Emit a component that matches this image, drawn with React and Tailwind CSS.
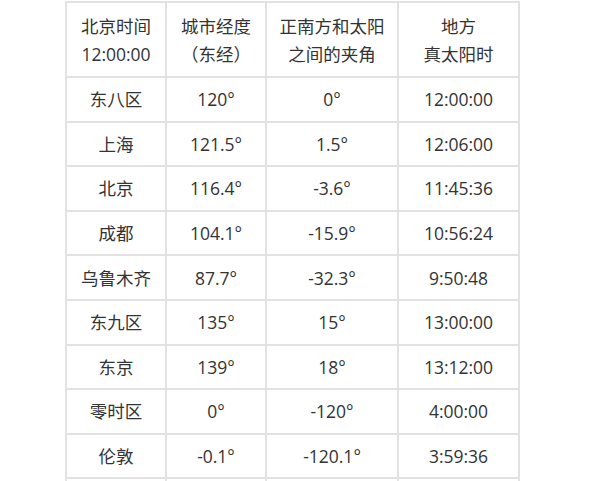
import React from "react";

const rows = [
  ["东八区", "120°", "0°", "12:00:00"],
  ["上海", "121.5°", "1.5°", "12:06:00"],
  ["北京", "116.4°", "-3.6°", "11:45:36"],
  ["成都", "104.1°", "-15.9°", "10:56:24"],
  ["乌鲁木齐", "87.7°", "-32.3°", "9:50:48"],
  ["东九区", "135°", "15°", "13:00:00"],
  ["东京", "139°", "18°", "13:12:00"],
  ["零时区", "0°", "-120°", "4:00:00"],
  ["伦敦", "-0.1°", "-120.1°", "3:59:36"],
  ["", "", "", ""],
];

const cell = "border-2 border-[#e2e2e2] text-center align-middle p-0";

const App = () => {
  return (
    <div
      className="w-[600px] h-[481px] overflow-hidden bg-white text-[#333] text-[17.5px]"
      style={{ fontFamily: '"Open Sans", "Noto Sans CJK SC", sans-serif' }}
    >
      <table className="border-collapse ml-[65px] mt-px table-fixed">
        <colgroup>
          <col className="w-[100px]" />
          <col className="w-[100px]" />
          <col className="w-[132px]" />
          <col className="w-[121px]" />
        </colgroup>
        <thead>
          <tr className="h-[75px] leading-[28px]">
            <td className={cell}>北京时间<br />12:00:00</td>
            <td className={cell}>城市经度<br />（东经）</td>
            <td className={cell}>正南方和太阳<br />之间的夹角</td>
            <td className={cell}>地方<br />真太阳时</td>
          </tr>
        </thead>
        <tbody>
          {rows.map((r, i) => (
            <tr key={i} className="h-[44.6px]">
              {r.map((c, j) => (
                <td key={j} className={cell}>{c}</td>
              ))}
            </tr>
          ))}
        </tbody>
      </table>
    </div>
  );
};

export default App;
